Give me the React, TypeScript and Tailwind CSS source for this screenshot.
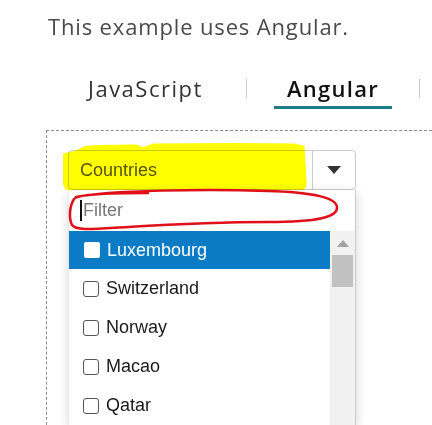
import React from "react"

const countries = ["Switzerland", "Norway", "Macao", "Qatar"]

export default function App() {
  return (
    <div className="w-[432px] h-[425px] overflow-hidden bg-white" style={{ fontFamily: "'Open Sans', sans-serif" }}>
      <p className="pl-[48px] pt-[11px] text-[22px] leading-[30px] text-[#4a4a4a] tracking-[0.85px]">This example uses Angular.</p>

      <div className="flex items-start mt-[32px] h-[36px]">
        <div className="ml-[88px] w-[118px] whitespace-nowrap text-[22px] leading-[30px] text-[#333] tracking-[1.5px]">JavaScript</div>
        <div className="ml-[40px] mt-[6px] w-px h-[19px] bg-[#ccc]" />
        <div className="ml-[27px] w-[118px] h-[36px] border-b-[3px] border-[#1b7c84] flex justify-center">
          <span className="text-[22px] leading-[30px] font-semibold text-[#111] tracking-[1.3px]">Angular</span>
        </div>
        <div className="ml-[27px] mt-[6px] w-px h-[19px] bg-[#ccc]" />
      </div>

      <div className="ml-[46px] mt-[21px] border-t border-l border-dashed border-[#8a8a8a] pl-[21px] pt-[19px] h-[300px]" style={{ fontFamily: "'Liberation Sans', Arial, sans-serif" }}>
        <div className="relative w-[288px]">
          <div className="h-[40px] border border-[#ccc] rounded-[4px] flex bg-white">
            <div className="flex-1 flex items-center pl-[11px] text-[18px] text-[#555]">Countries</div>
            <div className="w-[43px] border-l border-[#ccc] flex items-center justify-center">
              <svg width="14" height="9" viewBox="0 0 14 9"><path d="M0 0 L14 0 L7 8 Z" fill="#333" /></svg>
            </div>
          </div>
          <div
            className="absolute left-[-5px] top-[-7px] w-[244px] h-[48px] bg-[#ffff00] mix-blend-multiply rounded-b-[8px]"
            style={{ clipPath: "polygon(0 22%, 5% 16%, 9% 6%, 14% 4%, 30% 3%, 33% 9%, 37% 1%, 70% 0, 95% 1%, 99% 6%, 100% 100%, 0 100%)" }}
          />

          <div className="relative w-[287px] ml-[1px] bg-white border-r border-[#ccc] shadow-[0_3px_10px_rgba(0,0,0,0.18)]">
            <div className="h-[41px] flex items-center pl-[11px] text-[18px] text-[#777]">
              <span className="w-[2px] h-[21px] bg-[#111] mr-[1px]" />
              Filter
            </div>
            <svg className="absolute left-[-1px] top-[-3px]" width="272" height="48" viewBox="0 0 272 48" fill="none">
              <path
                d="M8 10 C 40 3, 140 2, 200 4 C 240 5, 268 10, 269 20 C 270 30, 250 35, 200 35 C 150 35, 110 37, 60 40 C 25 42, 8 44, 4 38 C 1 32, 1 20, 6 12 C 10 7, 40 6, 80 6"
                stroke="#e0101a"
                strokeWidth="2.5"
                strokeLinecap="round"
              />
            </svg>
            <div className="flex">
              <div className="w-[261px]">
                <div className="h-[38px] bg-[#0a7bc4] flex items-center pl-[15px] gap-[7px] text-[18px] text-white">
                  <span className="w-[16px] h-[16px] bg-white rounded-[2px]" />
                  Luxembourg
                </div>
                {countries.map(c => (
                  <div key={c} className="h-[39px] flex items-center pl-[14px] gap-[7px] text-[18px] text-[#1a1a1a]">
                    <span className="w-[16px] h-[16px] border border-[#555] rounded-[3px]" />
                    {c}
                  </div>
                ))}
              </div>
              <div className="flex-1 bg-[#f1f1f1] px-[2px] pt-[9px]">
                <div className="flex justify-center">
                  <svg width="12" height="7" viewBox="0 0 12 7"><path d="M0 7 L6 0 L12 7 Z" fill="#a3a3a3" /></svg>
                </div>
                <div className="mt-[8px] h-[32px] bg-[#c1c1c1]" />
              </div>
            </div>
          </div>
        </div>
      </div>
    </div>
  )
}
